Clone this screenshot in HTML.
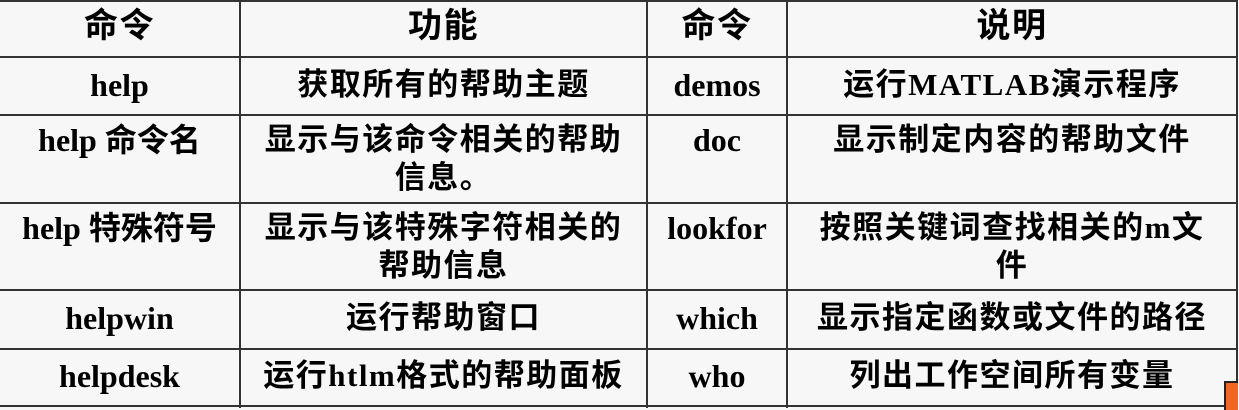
<!DOCTYPE html>
<html><head><meta charset="utf-8"><style>
body{margin:0;width:1239px;height:408px;background:#f7f7f7;position:relative;overflow:hidden}
.h{position:absolute;left:0;width:1238px;height:2px;background:#333}
.v{position:absolute;top:0;height:408px;width:2px;background:#333}
.c{position:absolute;display:flex;align-items:center;justify-content:center;text-align:center;font-family:"Liberation Serif","Noto Sans CJK SC",serif;font-weight:bold;font-size:31px;line-height:38px;color:#000;letter-spacing:1.5px}
.e{font-size:32px;letter-spacing:0}
.t{font-size:34px}
</style></head><body>
<div class="h" style="top:0"></div>
<div class="h" style="top:56px"></div>
<div class="h" style="top:114px"></div>
<div class="h" style="top:202px"></div>
<div class="h" style="top:289px"></div>
<div class="h" style="top:348px"></div>
<div class="h" style="top:405px"></div>
<div class="v" style="left:239px"></div>
<div class="v" style="left:646px"></div>
<div class="v" style="left:786px"></div>
<div class="v" style="left:1236px"></div>
<div style="position:absolute;left:1224px;top:381px;width:12px;height:27px;border-left:2px solid #222;border-top:2px solid #222;background:#f26522"></div>

<div class="c t" style="left:0;top:0;width:239px;height:54px">命令</div>
<div class="c t" style="left:241px;top:0;width:405px;height:54px">功能</div>
<div class="c t" style="left:648px;top:0;width:138px;height:54px">命令</div>
<div class="c t" style="left:788px;top:0;width:448px;height:54px">说明</div>

<div class="c e" style="left:0;top:57px;width:239px;height:55px">help</div>
<div class="c" style="left:241px;top:57px;width:405px;height:55px">获取所有的帮助主题</div>
<div class="c e" style="left:648px;top:57px;width:138px;height:55px">demos</div>
<div class="c" style="left:788px;top:57px;width:448px;height:55px">运行MATLAB演示程序</div>

<div class="c e" style="left:0;top:117px;width:239px;height:46px">help 命令名</div>
<div class="c" style="left:241px;top:116px;width:405px;height:86px">显示与该命令相关的帮助<br>信息。</div>
<div class="c e" style="left:648px;top:117px;width:138px;height:46px">doc</div>
<div class="c" style="left:788px;top:117px;width:448px;height:46px">显示制定内容的帮助文件</div>

<div class="c e" style="left:0;top:205px;width:239px;height:46px">help 特殊符号</div>
<div class="c" style="left:241px;top:204px;width:405px;height:86px">显示与该特殊字符相关的<br>帮助信息</div>
<div class="c e" style="left:648px;top:205px;width:138px;height:46px">lookfor</div>
<div class="c" style="left:788px;top:204px;width:448px;height:86px">按照关键词查找相关的m文<br>件</div>

<div class="c e" style="left:0;top:290px;width:239px;height:56px">helpwin</div>
<div class="c" style="left:241px;top:290px;width:405px;height:56px">运行帮助窗口</div>
<div class="c e" style="left:648px;top:290px;width:138px;height:56px">which</div>
<div class="c" style="left:788px;top:290px;width:448px;height:56px">显示指定函数或文件的路径</div>

<div class="c e" style="left:0;top:349px;width:239px;height:54px">helpdesk</div>
<div class="c" style="left:241px;top:349px;width:405px;height:54px">运行htlm格式的帮助面板</div>
<div class="c e" style="left:648px;top:349px;width:138px;height:54px">who</div>
<div class="c" style="left:788px;top:349px;width:448px;height:54px">列出工作空间所有变量</div>
</body></html>
